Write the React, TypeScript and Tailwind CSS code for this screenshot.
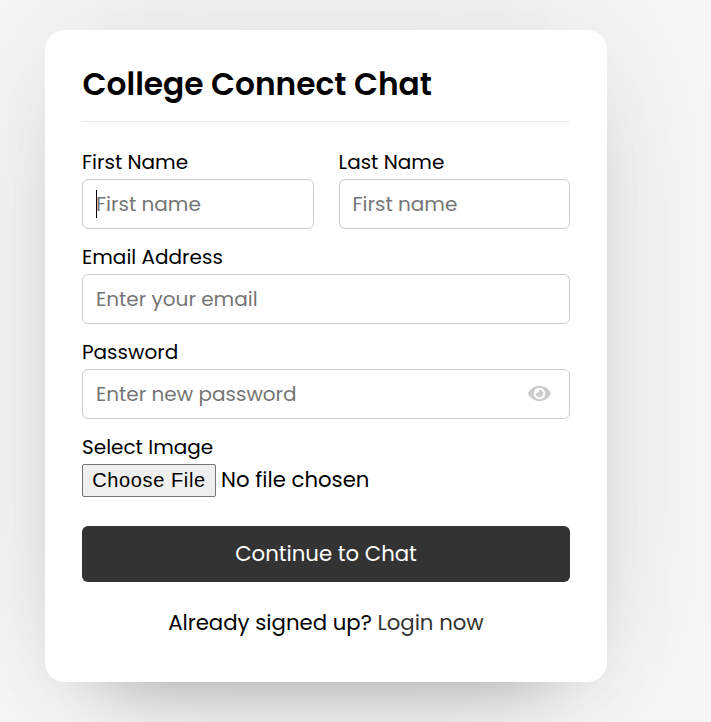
import { FaEye } from "react-icons/fa";

const inputBox =
  "block h-[50px] w-full rounded-[6px] border border-[#cccccc] bg-white px-[13px] text-[20px] outline-none placeholder:text-[#757575] placeholder:opacity-100";
const labelText = "mb-[2px] block h-[30px] w-max whitespace-nowrap text-[20px] leading-[30px]";

export default function App() {
  return (
    <div className="h-[722px] w-full overflow-hidden bg-[#f7f7f7] pt-[30px] pl-[45px] font-['Poppins','Inter',sans-serif] text-black">
      <section className="h-[652px] w-[562px] rounded-[20px] bg-white px-[37px] pt-[31px] shadow-[0_0_160px_0_rgba(0,0,0,0.1),0_40px_80px_-60px_rgba(0,0,0,0.5)]">
        <header className="border-b border-[#e6e6e6] pb-[13px]">
          <h1 className="w-max pl-[0.5px] text-[31.25px] leading-[47px] font-semibold whitespace-nowrap">College Connect Chat</h1>
        </header>
        <form className="mt-[25px]" onSubmit={(e) => e.preventDefault()}>
          <div className="flex gap-[25px]">
            <div className="w-[231.5px]">
              <label className={labelText}>First Name</label>
              <div className="relative">
                <input className={inputBox} placeholder="First name" />
                <span className="absolute top-[11px] left-[14px] h-[28px] w-px bg-black" />
              </div>
            </div>
            <div className="w-[231.5px]">
              <label className={labelText}>Last Name</label>
              <input className={inputBox} placeholder="First name" />
            </div>
          </div>
          <div className="mt-[13px]">
            <label className={labelText}>Email Address</label>
            <input className={inputBox} placeholder="Enter your email" />
          </div>
          <div className="mt-[13px]">
            <label className={labelText}>Password</label>
            <div className="relative">
              <input className={inputBox} type="password" placeholder="Enter new password" />
              <FaEye className="absolute top-[13px] right-[19px] text-[23px] text-[#cccccc]" />
            </div>
          </div>
          <div className="mt-[13px]">
            <label className={labelText}>Select Image</label>
            <div className="flex h-[33px] items-center gap-[5px] whitespace-nowrap">
              <button type="button" className="h-[33px] w-[134px] rounded-[2px] border border-[#767676] bg-[#efefef] font-['Liberation_Sans',sans-serif] text-[20px] leading-[31px] tracking-[0.6px]">
                Choose File
              </button>
              <span className="-mt-[2px] text-[21.25px]">No file chosen</span>
            </div>
          </div>
          <button className="mt-[29px] block h-[56px] w-full rounded-[6px] bg-[#333333] text-[21.25px] text-white">
            Continue to Chat
          </button>
        </form>
        <p className="mt-[26px] text-center text-[21.25px] leading-[30px] whitespace-nowrap">
          Already signed up? <a className="text-[#333333]">Login now</a>
        </p>
      </section>
    </div>
  );
}
